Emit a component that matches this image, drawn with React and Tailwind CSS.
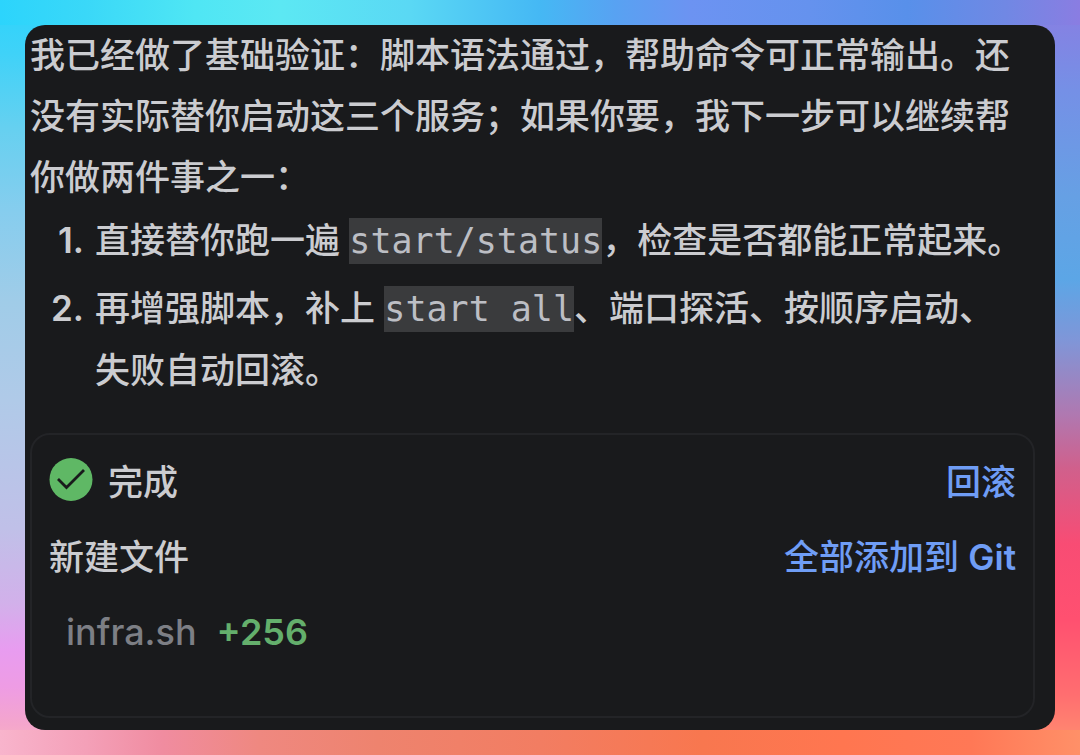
const paragraph =
  '我已经做了基础验证：脚本语法通过，帮助命令可正常输出。还没有实际替你启动这三个服务；如果你要，我下一步可以继续帮你做两件事之一：';

const files = [{ name: 'infra.sh', added: 256 }];

const Code = ({ children }) => (
  <code className="bg-[#3a3b3d] py-[3px] font-['DejaVu_Sans_Mono',monospace] font-normal text-[#bcbec4]">
    {children}
  </code>
);

const Step = ({ number, children }) => (
  <li className="flex">
    <span className="w-[54px] shrink-0 text-right font-semibold">{number}.</span>
    <div className="min-w-0 flex-1 pl-[11px]">{children}</div>
  </li>
);

const DoneIcon = () => (
  <svg viewBox="0 0 44 44" className="size-11 shrink-0" aria-hidden="true">
    <circle cx="22" cy="21.5" r="21.5" fill="#5fb865" />
    <path d="M9 21 L17.5 29.5 L35 12" fill="none" stroke="#191a1c" strokeWidth="2.8" />
  </svg>
);

// each edge of the frame has its own colour run: top, bottom, left, right
export default function App() {
  return (
    <div className="min-h-screen bg-[linear-gradient(90deg,#2cd4fc_0%,#3ad8f8_8%,#4fe6f4_18%,#5ce8f3_26%,#5ad8f4_38%,#45b8f4_50%,#58a2f2_57%,#6c93f2_64%,#6592ee_75%,#5890ea_84%,#7088e4_93%,#8a7de2_100%),linear-gradient(90deg,#f8b4cc_0%,#f4a0b8_8%,#f08ca0_15%,#ef8880_24%,#ee836e_35%,#f27d62_50%,#f8774f_65%,#ff7650_78%,#ff7856_90%,#ff9068_100%),linear-gradient(180deg,#2cd4fc_0%,#3fd2f8_7%,#66d0f0_17%,#86cdee_28%,#a0cce8_40%,#b0cae8_53%,#c0c0e8_70%,#d2b0ea_80%,#e89cf0_86%,#ee9ce4_91%,#f4a6cc_96%,#fbb8c0_100%),linear-gradient(180deg,#8a7de2_0%,#7590e6_12%,#66a0e4_26%,#5ca6e6_37%,#7f96d8_45%,#b078b0_55%,#d0608c_62%,#f84c74_72%,#ff5070_82%,#ff6e70_92%,#ff9470_100%)] bg-[size:100%_25px,100%_25px,50%_100%,50%_100%] bg-[position:top,bottom,left,right] bg-no-repeat p-[25px] font-['Inter','Noto_Sans_CJK_SC',sans-serif] text-[35px] leading-[61px] font-medium text-[#cbccd0]">
      <main className="rounded-[20px] bg-[#191a1c] pr-5 pb-3 pl-[5px]">
        <p>{paragraph}</p>

        <ol className="mt-0.5 flex flex-col gap-1.5">
          <Step number={1}>
            直接替你跑一遍 <Code>start/status</Code>，检查是否都能正常起来。
          </Step>
          <Step number={2}>
            再增强脚本，补上 <Code>start all</Code>、端口探活、按顺序启动、
            <span className="inline-block">失败自动回滚。</span>
          </Step>
        </ol>

        <section className="mt-8 flex flex-col gap-[27px] rounded-[20px] border-2 border-[#232427] px-[17px] pt-[23px] pb-[60px] leading-[48px]">
          <div className="flex items-center justify-between">
            <div className="flex items-start gap-[15px]">
              <DoneIcon />
              <span>完成</span>
            </div>
            <button className="text-[#6f9df5]">回滚</button>
          </div>

          <div className="flex items-center justify-between">
            <h2>新建文件</h2>
            <button className="text-[#6f9df5]">
              全部添加到 <span className="font-semibold">Git</span>
            </button>
          </div>

          <ul className="pl-[17px] text-[36px]">
            {files.map((file) => (
              <li key={file.name} className="flex gap-5">
                <a href="#" className="text-[#7d7f85]">
                  {file.name}
                </a>
                <span className="font-semibold text-[#64af6c]">+{file.added}</span>
              </li>
            ))}
          </ul>
        </section>
      </main>
    </div>
  );
}
